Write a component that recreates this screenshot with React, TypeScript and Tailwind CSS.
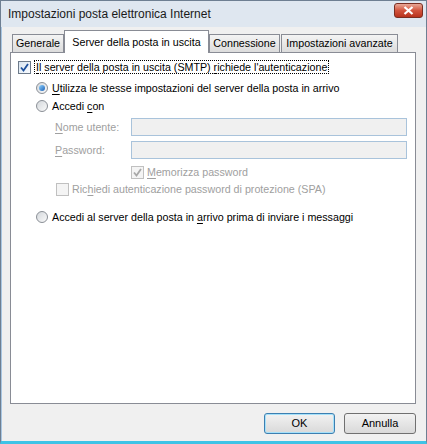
import React from "react";

const font = { fontFamily: '"Liberation Sans", Arial, sans-serif' };

function Checkbox({ checked, disabled }: { checked?: boolean; disabled?: boolean }) {
  return (
    <span
      className={
        "flex h-[13px] w-[13px] shrink-0 items-center justify-center border " +
        (disabled ? "border-[#c0c0c0] bg-[#f4f4f4]" : "border-[#6d7a8a] bg-gradient-to-br from-[#d8e4f0] to-[#f8fbff]")
      }
    >
      {checked && (
        <svg width="9" height="9" viewBox="0 0 9 9">
          <path
            d="M1 4.5 L3.5 7.5 L8 1"
            fill="none"
            stroke={disabled ? "#a8a8a8" : "#1b4f9c"}
            strokeWidth="1.8"
          />
        </svg>
      )}
    </span>
  );
}

function Radio({ checked }: { checked?: boolean }) {
  return (
    <span className="flex h-[12px] w-[12px] shrink-0 items-center justify-center rounded-full border border-[#8a8f96] bg-gradient-to-br from-[#d4d8dc] to-[#fafafa]">
      {checked && (
        <span className="h-[6px] w-[6px] rounded-full bg-gradient-to-br from-[#8fd3ff] to-[#1a5fb4]" />
      )}
    </span>
  );
}

function U({ children }: { children: React.ReactNode }) {
  return <span className="underline underline-offset-[2px]">{children}</span>;
}

function Tab({ label, width, active }: { label: string; width: string; active?: boolean }) {
  return (
    <div
      className={
        "flex items-center justify-center border border-b-0 border-[#898c95] " +
        width +
        (active
          ? " relative z-10 -mb-[1px] h-[23px] bg-white"
          : " h-[18px] bg-gradient-to-b from-[#f4f4f4] to-[#dcdcdc]")
      }
    >
      {label}
    </div>
  );
}

export default function App() {
  return (
    <div
      style={font}
      className="flex h-[444px] w-[427px] flex-col border border-[#6e7f92] border-b-[3px] border-b-[#3ec3e6] bg-[#f0f0f0] text-[10.7px] text-black"
    >
      <div className="flex h-[26px] shrink-0 items-center justify-between bg-[#dfe7f0] pl-[7px] pr-[3px]">
        <span className="text-[12px] text-[#1a1a1a]">Impostazioni posta elettronica Internet</span>
        <div className="mb-[7px] flex h-[15px] w-[29px] items-center justify-center rounded-[3px] border border-[#7a2e22] bg-gradient-to-b from-[#e8a796] via-[#d2543e] to-[#b8321c]">
          <svg width="11" height="9" viewBox="0 0 11 9">
            <path d="M1.5 1 L9.5 8 M9.5 1 L1.5 8" stroke="white" strokeWidth="2.2" />
          </svg>
        </div>
      </div>

      <div className="flex flex-1 flex-col border-l border-[#a9c7e3] pl-[8px] pr-[10px]">
        <div className="mt-[2px] flex h-[23px] items-end pl-[2px]">
          <Tab label="Generale" width="w-[52px]" />
          <Tab label="Server della posta in uscita" width="w-[145px]" active />
          <Tab label="Connessione" width="w-[71px]" />
          <div className="w-[1px]" />
          <Tab label="Impostazioni avanzate" width="w-[117px]" />
        </div>

        <div className="flex h-[352px] flex-col border border-[#898c95] bg-white">
          <div className="ml-[7px] mt-[7px] flex h-[14px] items-center gap-[3px]">
            <Checkbox checked />
            <span className="border border-dotted border-black px-[1px] leading-[12px]">
              <U>I</U>l server della posta in uscita (SMTP) <U>r</U>ichiede l'autenticazione
            </span>
          </div>

          <div className="ml-[25px] mt-[5px] flex h-[18px] items-center gap-[4px]">
            <Radio checked />
            <span>
              <U>U</U>tilizza le stesse impostazioni del server della posta in arrivo
            </span>
          </div>

          <div className="ml-[25px] mt-[0px] flex h-[18px] items-center gap-[4px]">
            <Radio />
            <span>
              Accedi <U>c</U>on
            </span>
          </div>

          <div className="ml-[44px] mt-[3px] flex h-[18px] items-center text-[#a0a0a0]">
            <span className="w-[76px]">
              <U>N</U>ome utente:
            </span>
            <div className="h-[18px] w-[276px] border border-[#a9c3db] bg-[#f0f0f0]" />
          </div>

          <div className="ml-[44px] mt-[5px] flex h-[18px] items-center text-[#a0a0a0]">
            <span className="w-[76px]">
              <U>P</U>assword:
            </span>
            <div className="h-[18px] w-[276px] border border-[#a9c3db] bg-[#f0f0f0]" />
          </div>

          <div className="ml-[120px] mt-[5px] flex h-[16px] items-center gap-[3px] text-[#a0a0a0]">
            <Checkbox checked disabled />
            <span>
              <U>M</U>emorizza password
            </span>
          </div>

          <div className="ml-[45px] mt-[1px] flex h-[16px] items-center gap-[3px] text-[#a0a0a0]">
            <Checkbox disabled />
            <span>
              Ric<U>h</U>iedi autenticazione password di protezione (SPA)
            </span>
          </div>

          <div className="ml-[25px] mt-[11px] flex h-[18px] items-center gap-[4px]">
            <Radio />
            <span>
              Accedi al server della posta in <U>a</U>rrivo prima di inviare i messaggi
            </span>
          </div>
        </div>

        <div className="mt-[9px] flex justify-end gap-[9px]">
          <button className="h-[21px] w-[71px] rounded-[3px] border border-[#3c7fb1] bg-gradient-to-b from-[#f2f2f2] to-[#d9d9d9] text-[11px] shadow-[inset_0_0_0_1px_#a6e1fa]">
            OK
          </button>
          <button className="h-[21px] w-[72px] rounded-[3px] border border-[#707070] bg-gradient-to-b from-[#f2f2f2] to-[#d9d9d9] text-[11px]">
            Annulla
          </button>
        </div>
      </div>
    </div>
  );
}
